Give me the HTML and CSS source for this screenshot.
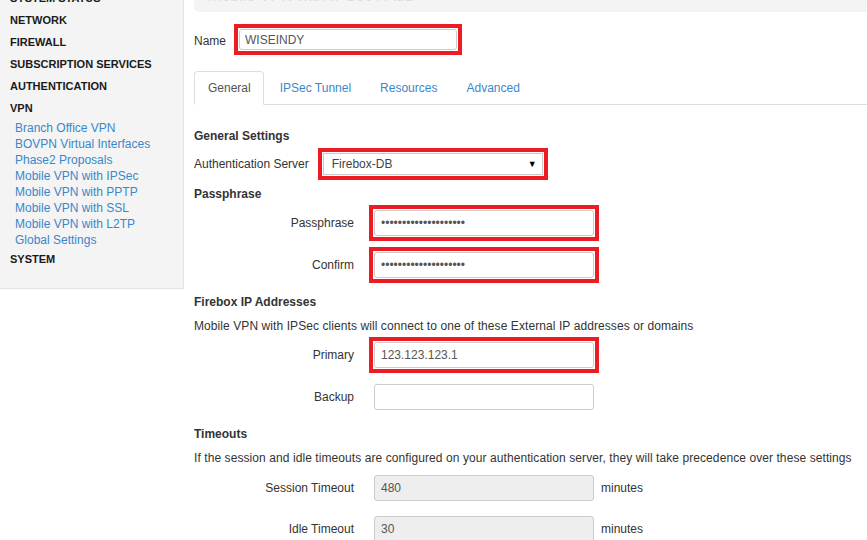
FILE: index.html
```html
<!DOCTYPE html>
<html>
<head>
<meta charset="utf-8">
<link rel="stylesheet" href="styles.css">
</head>
<body>
<div class="layout">
  <nav class="sidebar">
    <div class="nav-head">SYSTEM STATUS</div>
    <div class="nav-head">NETWORK</div>
    <div class="nav-head">FIREWALL</div>
    <div class="nav-head">SUBSCRIPTION SERVICES</div>
    <div class="nav-head">AUTHENTICATION</div>
    <div class="nav-head">VPN</div>
    <ul class="nav-sub">
      <li><a>Branch Office VPN</a></li>
      <li><a>BOVPN Virtual Interfaces</a></li>
      <li><a>Phase2 Proposals</a></li>
      <li><a>Mobile VPN with IPSec</a></li>
      <li><a>Mobile VPN with PPTP</a></li>
      <li><a>Mobile VPN with SSL</a></li>
      <li><a>Mobile VPN with L2TP</a></li>
      <li><a>Global Settings</a></li>
    </ul>
    <div class="nav-head">SYSTEM</div>
  </nav>
  <main class="main">
    <div class="page-title">Mobile VPN with IPSec / Add</div>
    <div class="name-row">
      <label class="name-label">Name</label>
      <span class="mark"><input class="inp name-inp" type="text" value="WISEINDY"></span>
    </div>
    <div class="tabs">
      <span class="tab active">General</span>
      <span class="tab">IPSec Tunnel</span>
      <span class="tab">Resources</span>
      <span class="tab">Advanced</span>
    </div>
    <div class="tab-content">
      <div class="h h-first">General Settings</div>
      <div class="auth-row">
        <label class="auth-label">Authentication Server</label>
        <span class="mark"><span class="select"><span>Firebox-DB</span><span class="arrow">▼</span></span></span>
      </div>
      <div class="h h-tight">Passphrase</div>
      <div class="row">
        <label class="lbl">Passphrase</label>
        <span class="mark"><input class="inp" type="password" value="xxxxxxxxxxxxxxxxxxxx"></span>
      </div>
      <div class="row">
        <label class="lbl">Confirm</label>
        <span class="mark"><input class="inp" type="password" value="xxxxxxxxxxxxxxxxxxxx"></span>
      </div>
      <div class="h h-tight">Firebox IP Addresses</div>
      <p class="desc">Mobile VPN with IPSec clients will connect to one of these External IP addresses or domains</p>
      <div class="row">
        <label class="lbl">Primary</label>
        <span class="mark"><input class="inp" type="text" value="123.123.123.1"></span>
      </div>
      <div class="row">
        <label class="lbl">Backup</label>
        <input class="inp" type="text" value="">
      </div>
      <div class="h h-tight">Timeouts</div>
      <p class="desc desc-loose">If the session and idle timeouts are configured on your authentication server, they will take precedence over these settings</p>
      <div class="row row-tight">
        <label class="lbl">Session Timeout</label>
        <input class="inp" type="text" value="480" disabled>
        <span class="unit">minutes</span>
      </div>
      <div class="row">
        <label class="lbl">Idle Timeout</label>
        <input class="inp" type="text" value="30" disabled>
        <span class="unit">minutes</span>
      </div>
    </div>
  </main>
</div>
</body>
</html>
```

FILE: styles.css
```css
* { box-sizing: border-box; }
html, body { margin: 0; padding: 0; background: #fff; }
body {
  font-family: "Liberation Sans", Arial, sans-serif;
  font-size: 12px;
  color: #333;
  overflow: hidden;
}
.layout {
  display: flex;
  align-items: flex-start;
  margin-top: -13px;
}
.sidebar {
  width: 184px;
  flex: none;
  background: #f4f4f4;
  border-right: 1px solid #e4e4e4;
  border-bottom: 1px solid #e4e4e4;
  padding: 0 0 18px 10px;
}
.nav-head {
  font-size: 11px;
  font-weight: bold;
  color: #1a1a1a;
  line-height: 22px;
  white-space: nowrap;
}
.nav-sub {
  list-style: none;
  margin: 0;
  padding: 1px 0 0 5px;
}
.nav-sub li {
  line-height: 16px;
}
.nav-sub a {
  color: #3a87c9;
  font-size: 12px;
}
.main {
  flex: 1;
  min-width: 0;
  padding-left: 10px;
}
.page-title {
  height: 25px;
  background: #f4f4f4;
  border-bottom-left-radius: 5px;
  color: #dcdcdc;
  font-size: 16px;
  line-height: 18px;
  padding-left: 14px;
  overflow: hidden;
}
.name-row {
  display: flex;
  align-items: center;
  margin-top: 17px;
}
.name-label { margin-right: 13px; line-height: 16px; padding-top: 3px; }
.mark {
  display: inline-flex;
  border: 4px solid #ec1c24;
  padding: 1px;
  margin: -5px;
  background: #fff;
}
.inp {
  width: 220px;
  height: 26px;
  border: 1px solid #ccc;
  border-radius: 3px;
  padding: 0 6px;
  font-family: "Liberation Sans", Arial, sans-serif;
  font-size: 12px;
  color: #555;
  background: #fff;
  outline: none;
}
.inp:disabled {
  background: #eee;
  color: #555;
}
.name-inp {
  width: 218px;
  height: 21px;
  padding-left: 5px;
}
.tabs {
  display: flex;
  margin-top: 21px;
  border-bottom: 1px solid #ddd;
}
.tab {
  padding: 8px 12px 8px 13px;
  line-height: 16px;
  border: 1px solid transparent;
  border-radius: 4px 4px 0 0;
  margin-right: 2px;
  margin-bottom: -1px;
  color: #3a87c9;
  font-size: 12px;
}
.tab.active {
  color: #555;
  background: #fff;
  border-color: #ddd;
  border-bottom-color: #fff;
}
.tab-content {
  padding-top: 23px;
}
.h {
  font-weight: bold;
  line-height: 16px;
  margin-bottom: 9px;
}
.h-first { margin-bottom: 9px; }
.h-tight { margin-bottom: 8px; }
.auth-row {
  display: flex;
  align-items: center;
  margin-bottom: 11px;
}
.auth-label { margin-right: 14px; }
.select {
  width: 220px;
  height: 22px;
  border: 1px solid #ccc;
  background: #fff;
  display: flex;
  align-items: center;
  justify-content: space-between;
  padding: 0 5px 0 8px;
  color: #444;
}
.arrow {
  font-size: 9px;
  color: #000;
}
.row {
  display: flex;
  align-items: center;
  margin-bottom: 16px;
}
.row-tight { margin-bottom: 15px; }
.lbl {
  width: 160px;
  text-align: right;
  margin-right: 20px;
  flex: none;
}
.desc {
  margin: 0 0 8px;
  line-height: 16px;
  white-space: nowrap;
  letter-spacing: 0.08px;
}
.desc-loose { margin-bottom: 9px; }
.unit {
  margin-left: 7px;
}
```
